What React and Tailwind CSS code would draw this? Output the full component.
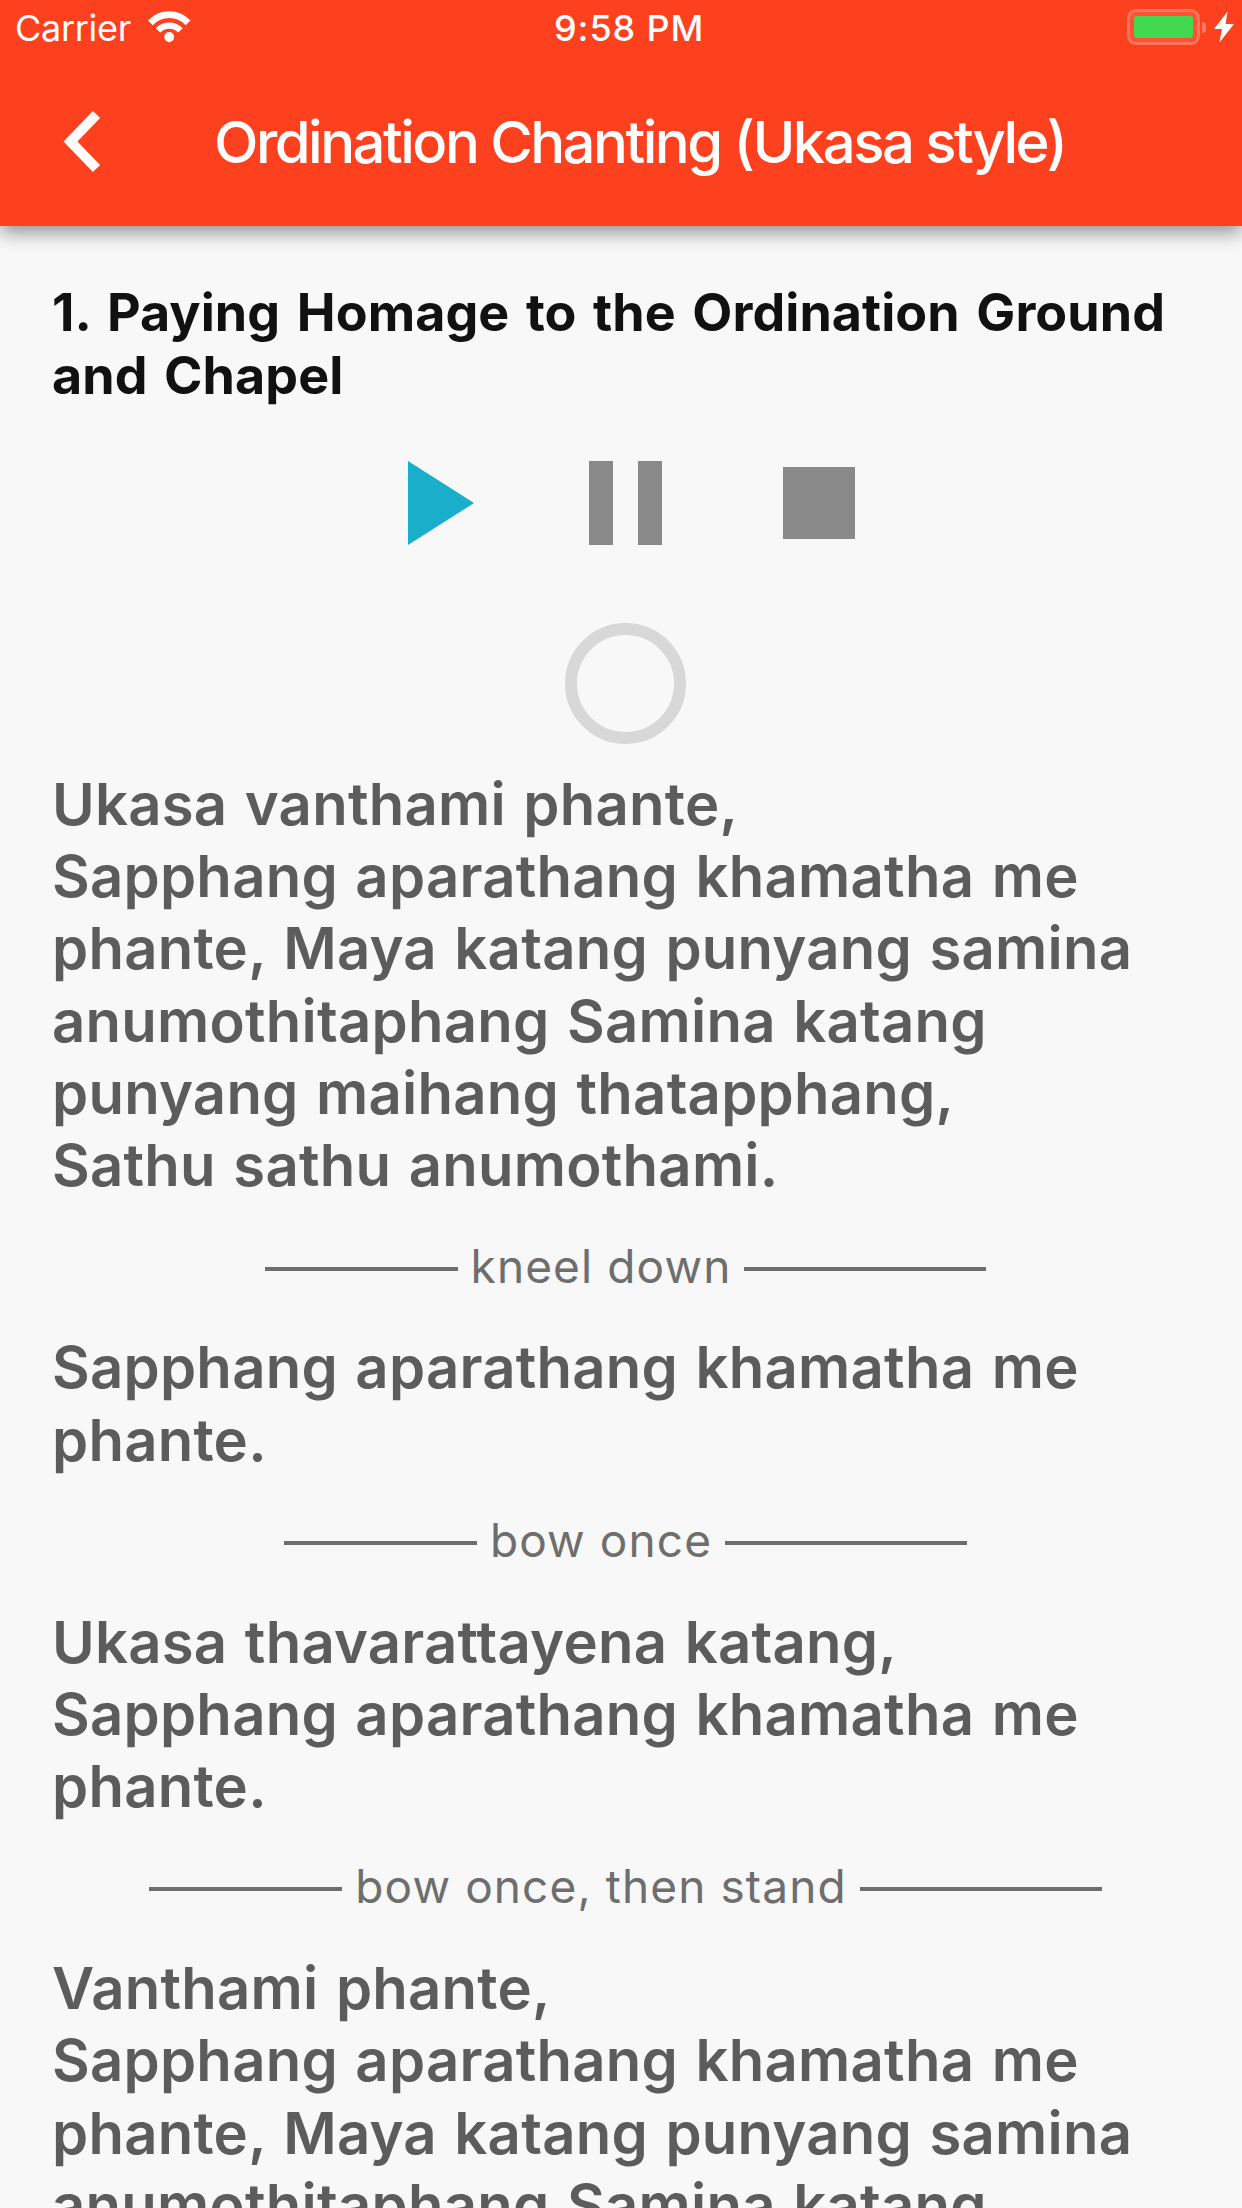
import React from "react";

const INTER = "font-['Inter','Liberation_Sans',sans-serif]";

function WifiIcon() {
  return (
    <svg className="ml-[17px] h-[32px] w-[43px]" viewBox="0 0 43 32" fill="none" stroke="#fff">
      <path d="M2.4 11.8C13 1 29.5 1 40.1 11.8" strokeWidth="6.8" />
      <path d="M10 19.4C16 13 26.5 13 32.5 19.4" strokeWidth="6.2" />
      <path d="M21.2 31.8l-5.2-5.8c3-3 7.4-3 10.4 0z" fill="#fff" stroke="none" />
      <circle cx="21.2" cy="26" r="4.9" fill="#fff" stroke="none" />
    </svg>
  );
}

function BatteryIcon() {
  return (
    <div className="flex items-center">
      <div className="h-[36px] w-[73px] rounded-[9px] border-[3px] border-white/20 bg-white/10 p-[4px]">
        <div className="h-full w-full rounded-[3px] bg-[#44d750]" />
      </div>
      <div className="ml-[2px] h-[11px] w-[4px] rounded-r-[4px] bg-white/30" />
      <svg className="ml-[8px] h-[32px] w-[20px]" viewBox="0 0 20 32" fill="#fff">
        <path d="M13.6 0.4L0 18h8L5.4 31.6L20 13h-8.4z" />
      </svg>
    </div>
  );
}

function Header() {
  return (
    <header className="relative z-10 h-[226px] bg-[#fd401d] text-white shadow-[0_6px_18px_rgba(0,0,0,0.43)]">
      <div className="flex h-[54px] items-center">
        <div className="flex w-[554px] items-center pl-[15px]">
          <span className="mt-[2px] text-[36px] leading-[48px] tracking-[-0.3px]">Carrier</span>
          <WifiIcon />
        </div>
        <span className="mt-[2px] w-[573px] text-[36px] leading-[48px] font-medium tracking-[0.9px]">9:58 PM</span>
        <BatteryIcon />
      </div>
      <div className="flex h-[172px] items-start pl-[60px]">
        <svg className="mt-[54px] h-[68px] w-[46px]" viewBox="0 0 46 68" fill="none" stroke="#fff" strokeWidth="10" strokeLinejoin="miter">
          <path d="M36.5 6.5L10.5 33.5L36.5 60.5" />
        </svg>
        <h1 className="ml-[108px] pt-[52px] text-[58px] leading-[72px] font-medium tracking-[-2.51px] whitespace-nowrap">
          Ordination Chanting (Ukasa style)
        </h1>
      </div>
    </header>
  );
}

function PlayerControls() {
  return (
    <div className="flex h-[84px] items-center pl-[356px]">
      <svg className="h-[84px] w-[67px]" viewBox="0 0 67 84" fill="#19aeca">
        <path d="M0 0L66 42L0 84z" />
      </svg>
      <div className="ml-[114px] flex h-[84px] w-[73px] justify-between">
        <div className="w-[24px] bg-[#898989]" />
        <div className="w-[24px] bg-[#898989]" />
      </div>
      <div className="ml-[121px] h-[72px] w-[72px] bg-[#898989]" />
    </div>
  );
}

function Verse({ lines }) {
  return (
    <p className="text-[58px] leading-[72.3px] font-semibold tracking-[0.24px] [word-spacing:2.6px] whitespace-nowrap text-[#5c5c5c]">
      {lines.map((line, i) => (
        <span key={i} className="block">{line}</span>
      ))}
    </p>
  );
}

function Cue({ children }) {
  return (
    <div className="flex h-[129.7px] w-[1147px] items-start justify-center gap-[13px] pt-[34px]">
      <div className="mt-[31px] h-[4px] w-[193px] bg-[#6e6e6e]" />
      <span className="text-[46px] leading-[60px] tracking-[1.1px] whitespace-nowrap text-[#6e6e6e]">{children}</span>
      <div className="mt-[31px] h-[4px] w-[242px] bg-[#6e6e6e]" />
    </div>
  );
}

export default function App() {
  return (
    <div className={`h-[2208px] w-[1242px] overflow-hidden bg-[#f8f8f8] ${INTER}`}>
      <Header />
      <main className="pt-[55px] pl-[52px]">
        <h2 className="text-[52px] leading-[63.4px] font-bold tracking-[0.06px] [word-spacing:4.2px] whitespace-nowrap text-[#111]">
          <span className="block">1. Paying Homage to the Ordination Ground</span>
          <span className="block">and Chapel</span>
        </h2>
        <div className="pt-[53px]">
          <PlayerControls />
        </div>
        <div className="mt-[78px] ml-[513px] h-[121px] w-[121px] rounded-full border-[12px] border-[#d8d8d8]" />
        <div className="pt-[24px]">
          <Verse
            lines={[
              "Ukasa vanthami phante,",
              "Sapphang aparathang khamatha me",
              "phante, Maya katang punyang samina",
              "anumothitaphang Samina katang",
              "punyang maihang thatapphang,",
              "Sathu sathu anumothami.",
            ]}
          />
          <Cue>kneel down</Cue>
          <Verse lines={["Sapphang aparathang khamatha me", "phante."]} />
          <Cue>bow once</Cue>
          <Verse lines={["Ukasa thavarattayena katang,", "Sapphang aparathang khamatha me", "phante."]} />
          <Cue>bow once, then stand</Cue>
          <Verse
            lines={[
              "Vanthami phante,",
              "Sapphang aparathang khamatha me",
              "phante, Maya katang punyang samina",
              "anumothitaphang Samina katang",
            ]}
          />
        </div>
      </main>
    </div>
  );
}
